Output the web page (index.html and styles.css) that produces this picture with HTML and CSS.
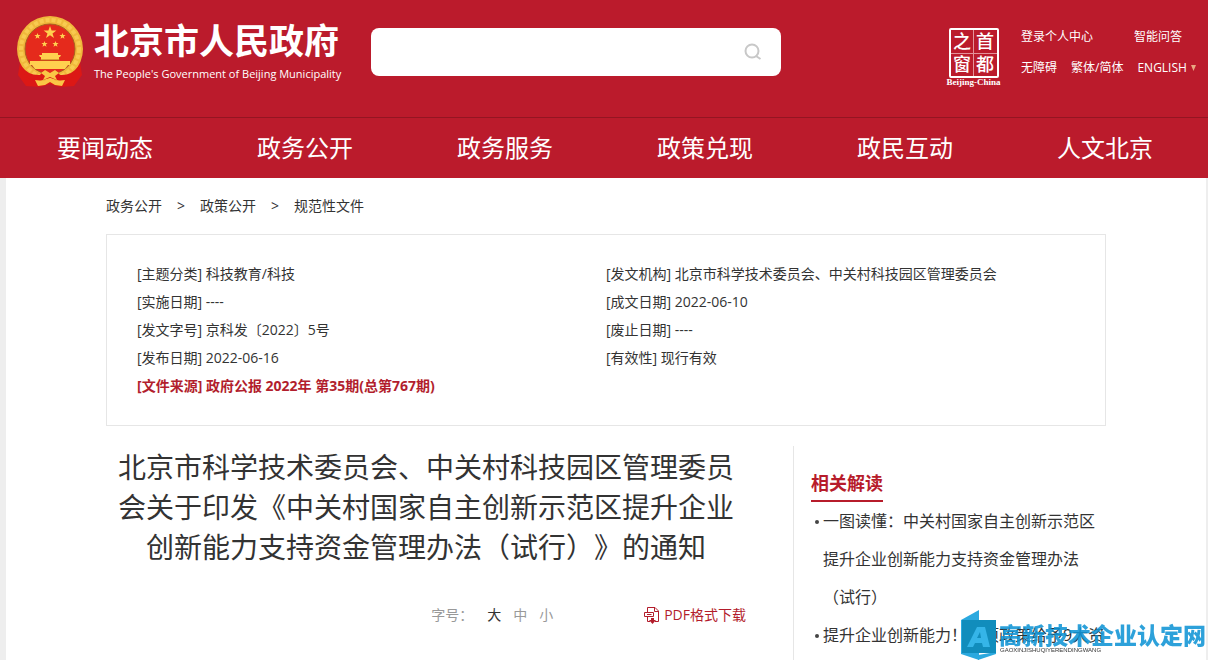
FILE: index.html
```html
<!DOCTYPE html>
<html lang="zh-CN">
<head>
<meta charset="utf-8">
<title>北京市人民政府</title>
<link rel="stylesheet" href="styles.css">
</head>
<body>
<header class="site-header">
  <div class="masthead">
    <a class="brand" href="#">
      <svg class="emblem" viewBox="0 0 68 73" aria-hidden="true">
        <path d="M4 46L2 59L10 70L24 71L34 68L44 71L58 70L66 59L64 46L52 58H16Z" fill="#dc1815"/>
        <circle cx="34" cy="33" r="33" fill="#f0b83c"/>
        <circle cx="34" cy="33" r="29" fill="none" stroke="#f8ca50" stroke-width="4" stroke-dasharray="4 2"/>
        <circle cx="34" cy="33" r="25" fill="#e52a1c" stroke="#a85f20"/>
        <g fill="#ffd04f">
          <path d="M34 10l1.600 4.500h4.800l-3.900 2.900 1.500 4.600-4-2.800-4 2.800 1.500-4.600-3.900-2.900h4.800z"/>
          <path d="M21.500 17l.8 2.100h2.300l-1.800 1.400.7 2.200-2-1.300-2 1.300.7-2.200-1.800-1.400h2.300zM46.500 17l.8 2.100h2.300l-1.800 1.400.7 2.200-2-1.300-2 1.300.7-2.200-1.800-1.400h2.300zM28.500 25l.8 2.100h2.300l-1.800 1.400.7 2.200-2-1.300-2 1.300.7-2.200-1.800-1.400h2.300zM39.500 25l.8 2.100h2.300l-1.800 1.400.7 2.200-2-1.300-2 1.300.7-2.200-1.800-1.400h2.300z"/>
          <path d="M26 37h16v2h3l-1 2H24l-1-2h3zM25 41h18v3H25zM14 45h40v4H14zM16 49h36l-3 4H19z"/>
        </g>
        <path d="M24 44h20" stroke="#b66b17"/>
        <path d="M5 50q8 10 19 9l4-5 6 3 6-3 4 5q11 1 19-9-3 15-18 15l-11-3-11 3Q8 65 5 50z" fill="#dc1815"/>
        <path d="M25 57l4-3 5 3 5-3 4 3-4 3 2 4-7-3-7 3 2-4zM19 64l9 1 6-3 6 3 9-1-3 6-7-1-5-3-5 3-7 1z" fill="#fac646"/>
      </svg>
      <span class="brand-text">
        <span class="brand-name">北京市人民政府</span>
        <span class="brand-en">The People's Government of Beijing Municipality</span>
      </span>
    </a>
    <form class="search" role="search">
      <input class="search-input" type="text" aria-label="搜索">
      <button class="search-button" type="button" aria-label="搜索">
        <svg viewBox="0 0 18 18" width="18" height="18"><circle cx="8" cy="8" r="6.500"/><path d="M12 13L16.500 16"/></svg>
      </button>
    </form>
    <div class="tools">
      <a class="seal" href="#">
        <span class="seal-grid"><span>之</span><span>首</span><span>窗</span><span>都</span></span>
        <span class="seal-caption">Beijing-China</span>
      </a>
      <div class="tool-links">
        <div class="tool-row"><a href="#">登录个人中心</a><a class="ask" href="#">智能问答</a></div>
        <div class="tool-row"><a href="#">无障碍</a><a href="#">繁体/简体</a><a class="english" href="#">ENGLISH<svg viewBox="0 0 5 6" width="5" height="6"><path d="M0 0H5L2.500 6Z"/></svg></a></div>
      </div>
    </div>
  </div>
  <nav class="main-nav">
    <a href="#">要闻动态</a><a href="#">政务公开</a><a href="#">政务服务</a><a href="#">政策兑现</a><a href="#">政民互动</a><a href="#">人文北京</a>
  </nav>
</header>
<main class="page">
  <nav class="crumbs"><a href="#">政务公开</a><span>&gt;</span><a href="#">政策公开</a><span>&gt;</span><a href="#">规范性文件</a></nav>
  <section class="meta">
    <ul>
      <li>[主题分类] 科技教育/科技</li>
      <li>[实施日期] ----</li>
      <li>[发文字号] 京科发〔2022〕5号</li>
      <li>[发布日期] 2022-06-16</li>
      <li class="source">[文件来源] 政府公报 2022年 第35期(总第767期)</li>
    </ul>
    <ul>
      <li>[发文机构] 北京市科学技术委员会、中关村科技园区管理委员会</li>
      <li>[成文日期] 2022-06-10</li>
      <li>[废止日期] ----</li>
      <li>[有效性] 现行有效</li>
    </ul>
  </section>
  <div class="columns">
    <article class="article">
      <h1>北京市科学技术委员会、中关村科技园区管理委员会关于印发《中关村国家自主创新示范区提升企业创新能力支持资金管理办法（试行）》的通知</h1>
      <div class="article-tools">
        <div class="sizes"><span class="sizes-label">字号：</span><button class="current" type="button">大</button><button type="button">中</button><button type="button">小</button></div>
        <a class="pdf" href="#">
          <svg viewBox="0 0 16 17" width="16" height="17"><path d="M3.500 5V.5H11L14.500 4V14.500H11M10.500 .5V4.500H14.500M3.500 10V14.500H6"/><path d="M.5 5.500H9.500V9.500H.5ZM3 7.500H7.500"/><path class="arrow" d="M7 11H10V13H12L8.500 17 5 13H7Z"/></svg>
          PDF格式下载</a>
      </div>
    </article>
    <aside class="related">
      <h2>相关解读</h2>
      <ul>
        <li><a href="#">一图读懂：中关村国家自主创新示范区提升企业创新能力支持资金管理办法（试行）</a></li>
        <li><a href="#">提升企业创新能力！三项政策给予9大资</a></li>
      </ul>
    </aside>
  </div>
</main>
<div class="watermark">
  <svg viewBox="0 0 36 50" width="36" height="50"><path d="M0 10L18 0V50L0 44Z" fill="#2ba9df"/><path d="M17 45L35 42V44L17 50Z" fill="#2ba9df"/><path d="M1 10H35V43H1Z" fill="#118dbc"/><path d="M6 37L16 17H24L29 37H22L21 33H14L12 37ZM16 28H20L19 22Z" fill="#35b5e8" fill-rule="evenodd"/></svg>
  <div class="watermark-text"><span class="watermark-name">高新技术企业认定网</span><span class="watermark-en">GAOXINJISHUQIYERENDINGWANG</span></div>
</div>
</body>
</html>
```
FILE: styles.css
```css
* { box-sizing: border-box; }
body {
  margin: 0;
  min-height: 100vh;
  display: flex;
  flex-direction: column;
  background: #eee;
  color: #333;
  font: 14px/28px "Open Sans", "Noto Sans CJK SC", sans-serif;
  text-spacing-trim: space-all;
}
a { color: inherit; text-decoration: none; }
ul { margin: 0; padding: 0; list-style: none; }
button { padding: 0; border: 0; background: none; font: inherit; color: inherit; cursor: pointer; }

.site-header { background: #bb1b2c; color: #fff; }
.masthead { display: flex; height: 117px; padding: 16px 8px 0 16px; align-items: flex-start; }
.brand { display: flex; gap: 10px; width: 355px; }
.emblem { width: 68px; height: 73px; }
.brand-text { display: flex; flex-direction: column; white-space: nowrap; }
.brand-name { font-size: 35px; line-height: 50px; font-weight: 700; }
.brand-en { font-size: 11px; line-height: 16px; }
.search { display: flex; width: 410px; height: 48px; margin-top: 12px; background: #fff; border-radius: 8px; }
.search-input { flex: 1; min-width: 0; padding: 0 16px; border: 0; outline: 0; background: none; font: inherit; }
.search-button { width: 56px; display: flex; align-items: center; justify-content: center; }
.search-button svg { fill: none; stroke: #c8c8c8; stroke-width: 2; }
.tools { display: flex; gap: 20px; margin-left: auto; padding-top: 12px; }
.seal { display: flex; flex-direction: column; align-items: center; width: 55px; }
.seal-grid {
  display: grid;
  grid-template-columns: 1fr 1fr;
  width: 50px;
  height: 50px;
  border: 2px solid #fff;
  border-radius: 2px;
  background: linear-gradient(#e4929a, #e4929a) center / 1px 100% no-repeat, linear-gradient(#e4929a, #e4929a) center / 100% 1px no-repeat;
  font-size: 18px;
  line-height: 22px;
  font-weight: 500;
  text-align: center;
}
.seal-caption { font: bold 9px/8px "Liberation Serif", serif; white-space: nowrap; }
.tool-links { width: 179px; padding-bottom: 8px; font-size: 12px; line-height: 18px; white-space: nowrap; }
.tool-row { display: flex; gap: 14px; margin-bottom: 13px; }
.ask { margin-left: auto; margin-right: 18px; }
.english { display: flex; align-items: center; gap: 4px; }
.english svg { fill: #e9a982; }
.main-nav { display: grid; grid-template-columns: repeat(6, 1fr); padding: 0 3px 0 5px; border-top: 1px solid #941522; }
.main-nav a { font-size: 24px; line-height: 60px; text-align: center; }

.page { flex: 1; margin: 0 2px 0 6px; padding: 14px 100px 0; background: #fff; }
.crumbs { display: flex; gap: 15px; }
.meta { display: grid; grid-template-columns: 469px 1fr; margin-top: 14px; padding: 25px 30px; border: 1px solid #e6e6e6; }
.source { color: #b21e2d; font-weight: 700; }
.columns { display: flex; justify-content: space-between; margin-top: 20px; }
.article { width: 640px; }
h1 { margin: 0; padding-top: 1px; font-size: 28px; line-height: 40px; font-weight: 400; text-align: center; }
.article-tools { display: flex; justify-content: flex-end; gap: 91px; margin-top: 34px; }
.sizes { display: flex; gap: 12px; color: #999; }
.sizes-label { margin-right: 2px; }
.sizes .current { color: #333; }
.pdf { display: flex; align-items: center; gap: 4px; color: #b31c2b; }
.pdf svg { fill: none; stroke: #b31c2b; }
.pdf .arrow { fill: #b31c2b; stroke: none; }
.related { width: 313px; padding: 20px 0 6px 17px; border-left: 1px solid #e6e6e6; }
h2 { display: inline-block; margin: 0; border-bottom: 2px solid #b71c2b; color: #b71c2b; font-size: 18px; line-height: 34px; vertical-align: top; }
.related ul { padding-left: 12px; font-size: 16px; line-height: 38px; }
.related li { position: relative; }
.related li::before { content: ""; position: absolute; left: -8px; top: 18px; width: 4px; height: 4px; border-radius: 50%; background: #444; }

.watermark { position: fixed; right: 2px; bottom: 0; display: flex; gap: 2px; }
.watermark-text { display: flex; flex-direction: column; padding-top: 14px; white-space: nowrap; }
.watermark-name { color: rgba(16, 148, 213, 0.88); font-size: 23px; line-height: 22px; font-weight: 900; }
.watermark-en { padding-left: 1px; color: #333; font: 6px/8px "Liberation Sans", sans-serif; }
```
